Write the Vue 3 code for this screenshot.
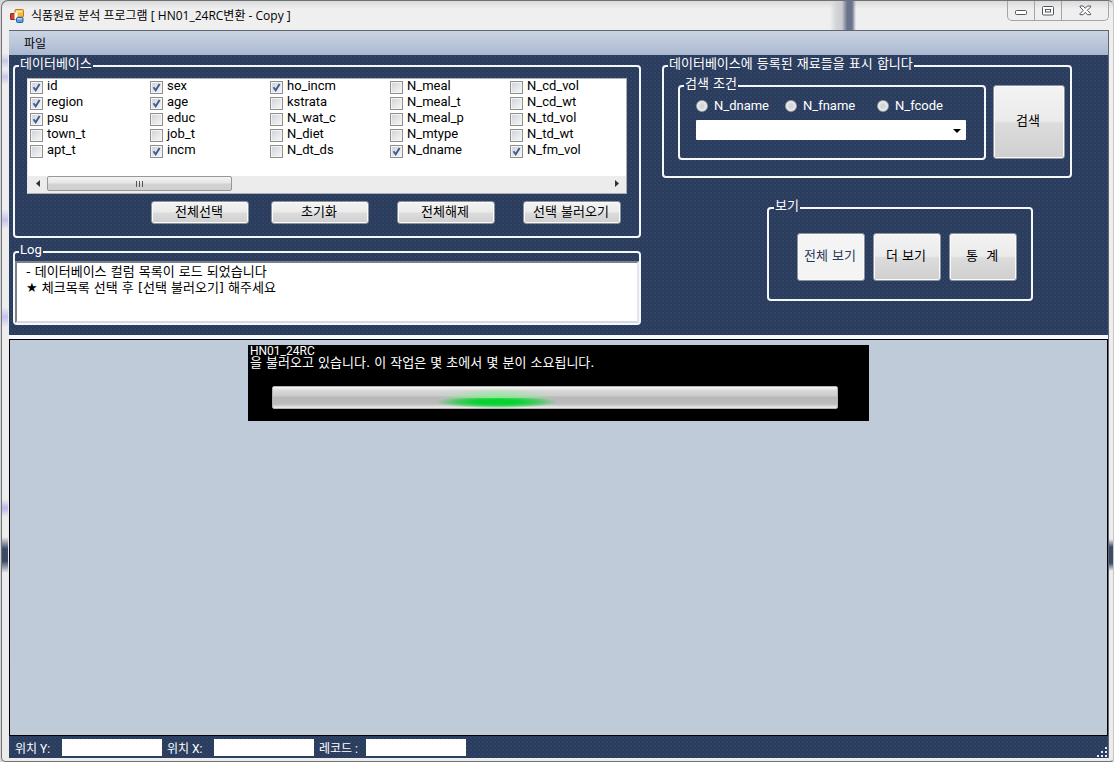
<script setup>
import { ref } from 'vue'

const columns = ref([
  { name: 'id', on: true },
  { name: 'region', on: true },
  { name: 'psu', on: true },
  { name: 'town_t', on: false },
  { name: 'apt_t', on: false },
  { name: 'sex', on: true },
  { name: 'age', on: true },
  { name: 'educ', on: false },
  { name: 'job_t', on: false },
  { name: 'incm', on: true },
  { name: 'ho_incm', on: true },
  { name: 'kstrata', on: false },
  { name: 'N_wat_c', on: false },
  { name: 'N_diet', on: false },
  { name: 'N_dt_ds', on: false },
  { name: 'N_meal', on: false },
  { name: 'N_meal_t', on: false },
  { name: 'N_meal_p', on: false },
  { name: 'N_mtype', on: false },
  { name: 'N_dname', on: true },
  { name: 'N_cd_vol', on: false },
  { name: 'N_cd_wt', on: false },
  { name: 'N_td_vol', on: false },
  { name: 'N_td_wt', on: false },
  { name: 'N_fm_vol', on: true }
])

const searchFields = ['N_dname', 'N_fname', 'N_fcode']
const field = ref('')
const keyword = ref('')
const log = ref('- 데이터베이스 컬럼 목록이 로드 되었습니다\n★ 체크목록 선택 후 [선택 불러오기] 해주세요')
const status = ref([
  { id: 'pos-y', label: '위치 Y:', value: '' },
  { id: 'pos-x', label: '위치 X:', value: '' },
  { id: 'record', label: '레코드 :', value: '' }
])
</script>

<template>
  <div class="window">
    <header class="titlebar">
      <svg class="app-icon" viewBox="0 0 14 14" aria-hidden="true">
        <rect x="5" y="0.5" width="8.5" height="7.5" rx="1" fill="#f5b934" stroke="#b97c18" />
        <rect x="6" y="1.500" width="6.500" height="2" fill="#fde39a" />
        <rect x="0.5" y="4.500" width="5.500" height="6" rx="0.500" fill="#d0402c" stroke="#8e2a22" />
        <rect x="4.500" y="3.500" width="3" height="7" fill="#fff" />
        <rect x="6.500" y="8.500" width="6.500" height="5" rx="1" fill="#5c9be6" stroke="#2c5fa8" />
        <rect x="7.500" y="9" width="4.500" height="1.500" fill="#b5d6fb" />
      </svg>
      <h1>식품원료 분석 프로그램 [ HN01_24RC변환 - Copy ]</h1>
      <span class="smudge"></span>
      <div class="caption">
        <button type="button" aria-label="최소화">
          <svg class="min" width="13" height="7" viewBox="0 0 13 7"><rect x="0.5" y="1.500" width="11" height="4" rx="1" fill="#fff" stroke="#55565f" /></svg>
        </button>
        <button type="button" aria-label="최대화">
          <svg width="13" height="10" viewBox="0 0 13 10"><rect x="0.5" y="0.5" width="11" height="8.500" rx="1" fill="#fff" stroke="#55565f" /><rect x="3.500" y="3.500" width="5" height="2.500" fill="#fff" stroke="#55565f" /></svg>
        </button>
        <button type="button" class="close" aria-label="닫기">
          <svg width="13" height="11" viewBox="0 0 13 11"><path d="M1 1h3.200l2.100 2.300L8.400 1h3.200v1L8.300 5.300l3.300 3.400v1H8.400L6.300 7.300 4.200 9.700H1v-1l3.300-3.400L1 2z" fill="#fff" stroke="#55565f" /></svg>
        </button>
      </div>
    </header>

    <main class="client">
      <nav class="menu"><button type="button">파일</button></nav>

      <section class="panel">
        <div class="col-left">
          <fieldset>
            <legend>데이터베이스</legend>
            <div class="db">
              <div class="listbox">
                <div class="items">
                  <label v-for="c in columns" :key="c.name">
                    <input v-model="c.on" type="checkbox" /><span class="box"><svg v-if="c.on" viewBox="0 0 9 9"><path d="M1.500 4.200l2.200 3L7.600 1" fill="none" stroke="#3f5a93" stroke-width="1.900" /></svg></span>{{ c.name }}
                  </label>
                </div>
                <div class="scroll">
                  <button type="button" class="arrow" aria-label="왼쪽"><svg width="4" height="7" viewBox="0 0 4 7"><path d="M4 0v7L0 3.500z" fill="#333" /></svg></button>
                  <div class="track"><div class="thumb"><i></i><i></i><i></i></div></div>
                  <button type="button" class="arrow" aria-label="오른쪽"><svg width="4" height="7" viewBox="0 0 4 7"><path d="M0 0v7l4-3.500z" fill="#333" /></svg></button>
                </div>
              </div>
              <div class="actions">
                <div class="pair">
                  <button type="button" class="btn">전체선택</button>
                  <button type="button" class="btn">초기화</button>
                </div>
                <button type="button" class="btn">전체해제</button>
                <button type="button" class="btn">선택 불러오기</button>
              </div>
            </div>
          </fieldset>

          <fieldset>
            <legend class="latin"><label for="log">Log</label></legend>
            <textarea id="log" v-model="log" class="log" readonly spellcheck="false"></textarea>
          </fieldset>
        </div>

        <div class="col-right">
          <fieldset>
            <legend>데이터베이스에 등록된 재료들을 표시 합니다</legend>
            <div class="search">
              <fieldset class="criteria">
                <legend>검색 조건</legend>
                <div class="criteria-body">
                  <div class="radios">
                    <label v-for="f in searchFields" :key="f"><input v-model="field" type="radio" name="field" :value="f" />{{ f }}</label>
                  </div>
                  <div class="combo">
                    <select v-model="keyword" aria-label="검색어"><option value=""></option></select>
                    <svg width="8" height="4" viewBox="0 0 8 4"><path d="M0 0h8L4 4z" fill="#000" /></svg>
                  </div>
                </div>
              </fieldset>
              <button type="button" class="btn big find">검색</button>
            </div>
          </fieldset>

          <fieldset class="view">
            <legend>보기</legend>
            <div class="view-body">
              <button type="button" class="btn big hot">전체 보기</button>
              <button type="button" class="btn big">더 보기</button>
              <button type="button" class="btn big">통&nbsp; 계</button>
            </div>
          </fieldset>
        </div>
      </section>

      <section class="work">
        <div class="loading">
          <p><span class="table-name">HN01_24RC</span><br />을 불러오고 있습니다. 이 작업은 몇 초에서 몇 분이 소요됩니다.</p>
          <div class="bar" role="progressbar" aria-label="불러오는 중"><div class="glow"></div></div>
        </div>
      </section>

      <footer class="status">
        <template v-for="s in status" :key="s.id">
          <label :for="s.id">{{ s.label }}</label>
          <input :id="s.id" v-model="s.value" type="text" />
        </template>
        <svg class="grip" width="12" height="12" viewBox="0 0 12 12" aria-hidden="true">
          <g fill="#e8eef6">
            <rect x="9" y="1" width="2" height="2" />
            <rect x="5" y="5" width="2" height="2" /><rect x="9" y="5" width="2" height="2" />
            <rect x="1" y="9" width="2" height="2" /><rect x="5" y="9" width="2" height="2" /><rect x="9" y="9" width="2" height="2" />
          </g>
        </svg>
      </footer>
    </main>
  </div>
</template>

<style>
html,
body {
  background: #d4d6d8;
}
</style>

<style scoped>
* {
  box-sizing: border-box;
}
.window {
  display: flex;
  flex-direction: column;
  min-height: 100vh;
  margin-left: 1px;
  padding: 0 4px 3px 7px;
  border: 1px solid #6f7173;
  border-right-color: #c4c6c8;
  border-radius: 7px 6px 4px 5px;
  background:
    linear-gradient(
      transparent 52px, #c9c9ee 60px, transparent 68px, #c9c9ee 76px, transparent 84px,
      transparent 208px, #c3c3ee 219px, transparent 228px,
      transparent 306px, #c3c3ee 316px, transparent 326px,
      transparent 498px, #b9b9ea 507px, transparent 516px,
      transparent 536px, #3d4a68 548px, #3d4a68 560px, transparent 572px) left / 6px 100% no-repeat,
    linear-gradient(transparent 538px, #3d4a68 546px, #3d4a68 562px, transparent 570px) right / 4px 100% no-repeat,
    linear-gradient(#d9dbdb, #efefef 8px, #ececec);
  font-family: Roboto, "Noto Sans CJK KR", sans-serif;
  font-size: 13px;
  color: #000;
}
button,
input,
select,
textarea {
  font: inherit;
  margin: 0;
}
.titlebar {
  display: flex;
  align-items: center;
  height: 29px;
  gap: 7px;
  padding-left: 1px;
}
.app-icon {
  width: 14px;
  height: 14px;
}
h1 {
  margin: 0;
  font-family: "Open Sans", "Noto Sans CJK KR", sans-serif;
  font-size: 12px;
  font-weight: 400;
  line-height: 16px;
  white-space: nowrap;
}
.smudge {
  align-self: stretch;
  width: 28px;
  margin-left: auto;
  margin-right: 142px;
  background: linear-gradient(90deg, transparent, #d3d5d8 6px, #c9cbce 12px, #69748c 17px, #69748c 22px, transparent 26px);
}
.caption {
  display: flex;
  align-self: flex-start;
  height: 20px;
  border: 1px solid #a3a5a8;
  border-top: 0;
  border-radius: 0 0 5px 5px;
}
.caption button {
  display: flex;
  align-items: center;
  justify-content: center;
  width: 27px;
  padding: 0;
  border: 0;
  border-right: 1px solid #a3a5a8;
  background: none;
}
.caption .min {
  margin-top: 4px;
}
.caption .close {
  width: 46px;
  border-right: 0;
}
.client {
  display: flex;
  flex: 1;
  flex-direction: column;
  border-top: 1px solid #5f6672;
  border-right: 1px solid #5f6672;
}
.menu {
  height: 24px;
  padding-left: 9px;
  background: linear-gradient(#cad4e3, #b5c1d6 70%, #a9b7cf);
}
.menu button {
  display: block;
  height: 24px;
  padding: 0 6px 2px;
  border: 0;
  background: none;
  font-size: 12px;
}
.panel,
.status {
  background:
    radial-gradient(circle, #31456a 1px, transparent 1px) 0 0 / 4px 4px,
    radial-gradient(circle, #2f4163 1px, transparent 1px) 2px 2px / 4px 4px,
    #2a3b5a;
}
.panel {
  display: grid;
  grid-template-columns: 628fr 410fr;
  gap: 21px;
  padding: 2px 36px 10px 4px;
}
.col-left,
.col-right {
  display: flex;
  flex-direction: column;
  min-width: 0;
}
.col-left {
  gap: 5px;
}
.col-right {
  gap: 21px;
}
fieldset {
  min-width: 0;
  margin: 0;
  padding: 0;
  border: 2px solid #f4f8fc;
  border-radius: 4px;
}
legend {
  margin-left: 4px;
  padding: 0 1px 4px;
  color: #fff;
  line-height: 14px;
}
legend,
.btn,
.log,
.loading p {
  font-family: "DejaVu Sans", "Noto Sans CJK KR", sans-serif;
}
legend.latin {
  font-family: Roboto, "Noto Sans CJK KR", sans-serif;
}
.db {
  padding: 3px 12px 12px;
}
.listbox {
  border: 1px solid #a9aeb8;
  border-left-color: #e3e6ea;
  background: #fff;
}
.items {
  display: grid;
  grid-template-rows: repeat(5, 16px);
  grid-auto-flow: column;
  grid-auto-columns: 120px;
  height: 97px;
  padding-left: 2px;
  overflow: hidden;
}
.items label {
  display: flex;
  position: relative;
  gap: 4px;
  line-height: 14px;
}
.items input {
  position: absolute;
  width: 13px;
  height: 16px;
  opacity: 0;
}
.box {
  width: 13px;
  height: 13px;
  margin-top: 2px;
  padding: 1px;
  border: 1px solid #8e8f8f;
  background: linear-gradient(135deg, #cfd3d8, #f6f6f6);
  box-shadow: inset 0 0 0 1px #f4f4f4;
}
.box svg {
  display: block;
  width: 9px;
  height: 9px;
}
.scroll {
  display: flex;
  height: 17px;
  background: #ececec;
}
.arrow {
  display: flex;
  align-items: center;
  justify-content: center;
  width: 19px;
  padding: 0 0 2px;
  border: 0;
  background: none;
}
.track {
  flex: 1;
}
.thumb {
  display: flex;
  align-items: center;
  justify-content: center;
  gap: 2px;
  width: 33%;
  height: 15px;
  border: 1px solid #979797;
  border-radius: 2px;
  background: linear-gradient(#f4f4f4, #e6e6e6 48%, #d2d2d2 52%, #d0d0d0);
}
.thumb i {
  width: 1px;
  height: 6px;
  background: #555;
}
.actions {
  display: flex;
  justify-content: flex-end;
  gap: 28px;
  padding: 7px 6px 0 0;
}
.pair {
  display: flex;
  gap: 22px;
}
.btn {
  width: 98px;
  height: 23px;
  padding: 0 2px 2px 0;
  border: 1px solid #8d939c;
  border-radius: 3px;
  background: linear-gradient(#f3f3f3, #ebebeb 48%, #dcdcdc 52%, #cfcfcf);
  box-shadow: inset 0 0 0 1px #fafafa;
  color: #000;
  line-height: 16px;
  white-space: nowrap;
}
.btn.big {
  width: 68px;
  height: 48px;
}
.btn.find {
  width: 72px;
  height: 74px;
  margin-top: 10px;
}
.btn.hot {
  background: #f4f4f5;
  color: #293955;
}
.log {
  display: block;
  width: 100%;
  height: 62px;
  padding: 1px 9px 0;
  border: 2px solid;
  border-color: #7c818a #e3e6ea #d5d8dd #7c818a;
  border-radius: 0;
  outline: 0;
  background: #fff;
  line-height: 16px;
  resize: none;
}
.search {
  display: flex;
  align-items: flex-start;
  gap: 7px;
  padding: 0 5px 16px 14px;
}
.criteria {
  flex: 1;
  margin-top: 2px;
}
.criteria-body {
  padding: 1px 18px 18px 16px;
}
.radios {
  display: grid;
  grid-template-columns: 89px 92px auto;
  height: 20px;
  color: #fff;
}
.radios label {
  display: flex;
  align-items: center;
  gap: 6px;
  line-height: 18px;
  padding-bottom: 1px;
}
.radios input {
  width: 12px;
  height: 12px;
  border: 1px solid #9a9ea5;
  border-radius: 50%;
  appearance: none;
  background: radial-gradient(circle at 50% 50%, #d3d5d8 2px, #f3f3f3 5px);
}
.combo {
  position: relative;
  margin-top: 4px;
}
.combo select {
  display: block;
  width: 100%;
  height: 20px;
  padding: 0 18px 0 3px;
  border: 0;
  border-radius: 1px;
  appearance: none;
  background: #fff;
}
.combo svg {
  position: absolute;
  top: 9px;
  right: 5px;
  pointer-events: none;
}
.view {
  align-self: flex-end;
  margin-right: 39px;
}
.view legend {
  margin-left: 5px;
}
.view-body {
  display: flex;
  gap: 8px;
  padding: 16px 14px 18px 28px;
}
.work {
  flex: 1;
  padding: 5px;
  border: 1px solid #000;
  box-shadow: 0 -4px 0 #f6f9fb;
  margin-top: 4px;
  background: #bfcbd9;
}
.loading {
  width: 621px;
  max-width: 100%;
  height: 76px;
  margin: 0 auto;
  padding: 0 31px 0 24px;
  background: #000;
}
.loading p {
  height: 41px;
  margin: 0 0 0 -22px;
  color: #fff;
  line-height: 12px;
}
.table-name {
  font-family: Roboto, sans-serif;
  font-size: 12px;
}
.bar {
  height: 23px;
  border: 1px solid #b2b2b2;
  border-radius: 2px;
  background: linear-gradient(#f8f8f8, #d6d6d6 4px, #cbcbcb 9px, #b8b8b8 10px, #bdbdbd 17px, #efefef);
}
.glow {
  width: 120px;
  height: 21px;
  margin-left: 29%;
  background:
    radial-gradient(ellipse at 50% 40%, #07d22f 25%, rgba(7, 210, 47, 0.6) 50%, transparent 72%) 0 11px / 100% 10px no-repeat,
    radial-gradient(ellipse at 50% 100%, rgba(125, 245, 140, 0.9), transparent 70%) 0 1px / 100% 11px no-repeat;
}
.status {
  display: flex;
  align-items: center;
  height: 22px;
  padding-left: 6px;
  color: #fff;
  font-size: 12px;
}
.status label {
  width: 47px;
  white-space: nowrap;
}
.status input {
  width: 100px;
  height: 17px;
  margin-right: 5px;
  padding: 0 2px;
  border: 0;
  background: #fff;
}
.grip {
  align-self: flex-end;
  margin-left: auto;
}
</style>
